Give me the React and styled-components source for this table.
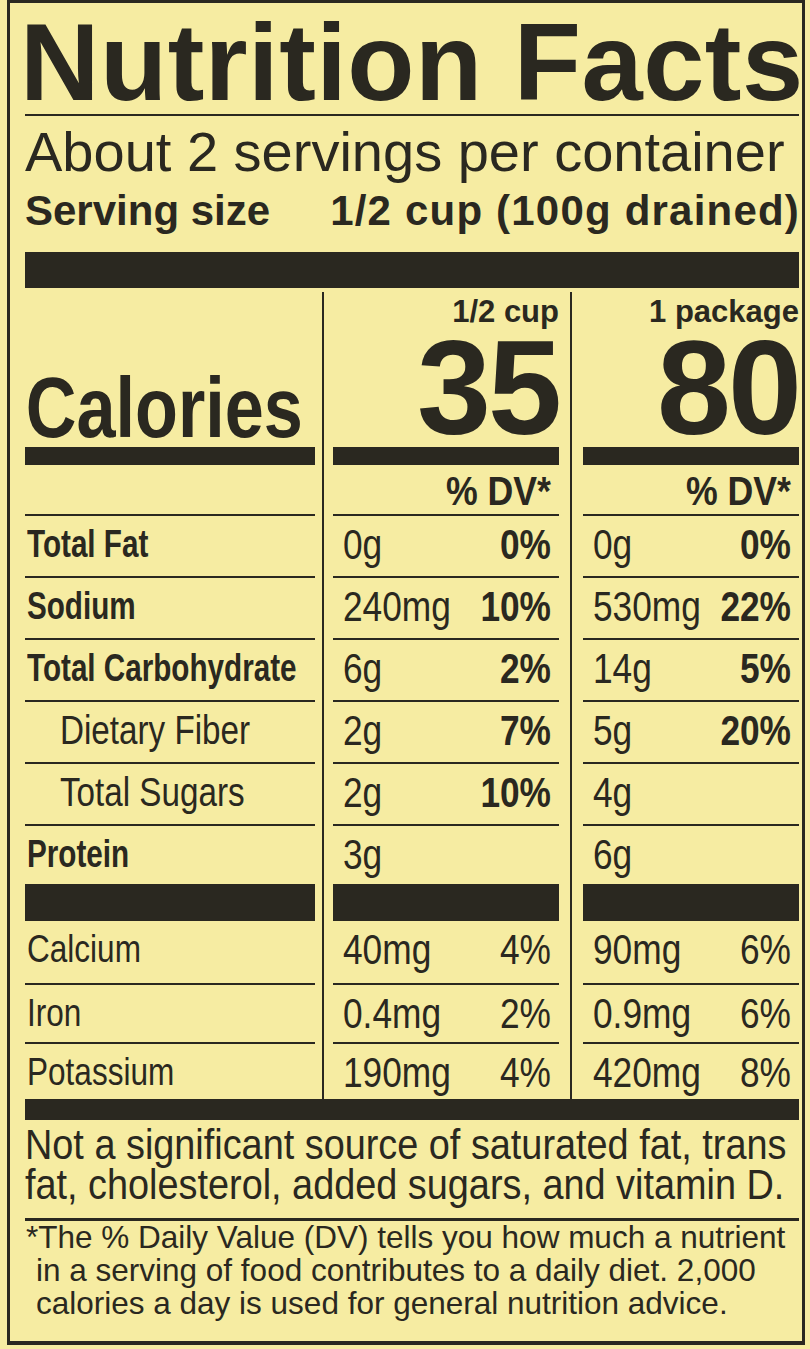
import React from "react";
import styled, { createGlobalStyle } from "styled-components";

const INK = "#2a2820";
const PAPER = "#f6eca2";
const SANS = "'Liberation Sans', Arial, Helvetica, sans-serif";

const NUTRIENTS = [
  { name: "Total Fat", bold: true, half: ["0g", "0%"], pack: ["0g", "0%"] },
  { name: "Sodium", bold: true, half: ["240mg", "10%"], pack: ["530mg", "22%"] },
  { name: "Total Carbohydrate", bold: true, half: ["6g", "2%"], pack: ["14g", "5%"] },
  { name: "Dietary Fiber", indent: true, half: ["2g", "7%"], pack: ["5g", "20%"] },
  { name: "Total Sugars", indent: true, half: ["2g", "10%"], pack: ["4g", ""] },
  { name: "Protein", bold: true, half: ["3g", ""], pack: ["6g", ""] },
];

const VITAMINS = [
  { name: "Calcium", h: 62, half: ["40mg", "4%"], pack: ["90mg", "6%"] },
  { name: "Iron", h: 57, half: ["0.4mg", "2%"], pack: ["0.9mg", "6%"] },
  { name: "Potassium", h: 55, half: ["190mg", "4%"], pack: ["420mg", "8%"] },
];

const GlobalStyle = createGlobalStyle`
  html, body {
    margin: 0;
    padding: 0;
    background: ${PAPER};
  }
  body {
    font-family: ${SANS};
    color: ${INK};
  }
`;

const Label = styled.div`
  box-sizing: border-box;
  width: 798px;
  height: 1345px;
  margin-left: 7px;
  border: 3px solid ${INK};
  border-bottom-width: 4px;
  padding: 7px 3px 0 15px;
  display: flex;
  flex-direction: column;
`;

// the printed label uses a condensed face; squeeze regular sans to match
const Squeeze = styled.div`
  display: flex;
  align-items: baseline;
  justify-content: ${(p) => p.$justify || "space-between"};
  width: ${(p) => 100 / p.$k}%;
  transform: scaleX(${(p) => p.$k});
  transform-origin: left top;
  white-space: nowrap;
`;

const Title = styled.h1`
  margin: 0;
  font: 700 110px/104px ${SANS};
  letter-spacing: 0.5px;
  text-indent: -5px;
  white-space: nowrap;
  border-bottom: 2px solid ${INK};
`;

const Servings = styled.div`
  font: 400 56px/71px ${SANS};
  white-space: nowrap;
`;

const ServingSize = styled.div`
  display: flex;
  justify-content: space-between;
  font: 700 42px/47px ${SANS};
  white-space: nowrap;
`;

const ServingAmount = styled.span`
  letter-spacing: 1.2px;
  margin-right: -1px;
`;

const Bar = styled.div`
  height: ${(p) => p.$h}px;
  margin-top: ${(p) => p.$top || 0}px;
  background: ${INK};
`;

const Columns = styled.div`
  display: flex;
`;

const Column = styled.div`
  display: flex;
  flex-direction: column;
  min-width: 0;
  width: ${(p) => (p.$w ? `${p.$w}px` : "auto")};
  flex: ${(p) => (p.$w ? "none" : "1")};
`;

const Divider = styled.div`
  width: 2px;
  margin: 4px ${(p) => p.$right}px 0 ${(p) => p.$left}px;
  background: ${INK};
`;

const HeaderCell = styled.div`
  height: 159px;
  display: flex;
  flex-direction: column;
  justify-content: ${(p) => (p.$left ? "flex-end" : "flex-start")};
  align-items: ${(p) => (p.$left ? "stretch" : "flex-end")};
`;

const CaloriesWord = styled.div`
  font: 700 86px/80px ${SANS};
  padding-left: 1px;
`;

const PortionLabel = styled.div`
  font: 700 31px/48px ${SANS};
  white-space: nowrap;
`;

const BigNumber = styled.div`
  font: 700 133px/105px ${SANS};
  letter-spacing: -3px;
`;

const DvCell = styled.div`
  height: 49px;
  border-bottom: 2px solid ${INK};
  font: 700 41px/52px ${SANS};
  padding-right: 8px;
`;

const Cell = styled.div`
  height: ${(p) => p.$h}px;
  border-bottom: ${(p) => (p.$last ? "none" : `2px solid ${INK}`)};
  font: 400 42px/57px ${SANS};
  padding: ${(p) => (p.$values ? "0 8px 0 10px" : `0 0 0 ${p.$indent ? 35 : 2}px`)};
`;

const Name = styled.span`
  font-weight: ${(p) => (p.$bold ? 700 : 400)};
  font-size: ${(p) => (p.$indent ? 40 : 38)}px;
`;

const Percent = styled.span`
  font-weight: ${(p) => (p.$bold ? 700 : 400)};
`;

const Statement = styled.div`
  margin-top: 4px;
  padding-bottom: 14px;
  border-bottom: 3px solid ${INK};
  font: 400 43px/40px ${SANS};
`;

const Footnote = styled.p`
  margin: 0;
  padding-left: 11px;
  text-indent: -10px;
  font: 400 31.5px/33px ${SANS};
  white-space: nowrap;
`;

function nameSqueeze(n) {
  if (n.bold) return 0.78;
  return 0.83;
}

function NameColumn() {
  const lastN = NUTRIENTS.length - 1;
  const lastV = VITAMINS.length - 1;
  return (
    <Column $w={290}>
      <HeaderCell $left>
        <Squeeze $k={0.816} $justify="flex-start">
          <CaloriesWord>Calories</CaloriesWord>
        </Squeeze>
      </HeaderCell>
      <Bar $h={18} />
      <DvCell />
      {NUTRIENTS.map((n, i) => (
        <Cell key={n.name} $h={i === lastN ? 58 : 60} $last={i === lastN} $indent={n.indent}>
          <Squeeze $k={nameSqueeze(n)} $justify="flex-start">
            <Name $bold={n.bold} $indent={n.indent}>
              {n.name}
            </Name>
          </Squeeze>
        </Cell>
      ))}
      <Bar $h={37} />
      {VITAMINS.map((v, i) => (
        <Cell key={v.name} $h={v.h} $last={i === lastV}>
          <Squeeze $k={0.83} $justify="flex-start">
            <Name>{v.name}</Name>
          </Squeeze>
        </Cell>
      ))}
    </Column>
  );
}

function PortionColumn({ portion, calories, field, width }) {
  const lastN = NUTRIENTS.length - 1;
  const lastV = VITAMINS.length - 1;
  return (
    <Column $w={width}>
      <HeaderCell>
        <PortionLabel>{portion}</PortionLabel>
        <BigNumber>{calories}</BigNumber>
      </HeaderCell>
      <Bar $h={18} />
      <DvCell>
        <Squeeze $k={0.87} $justify="flex-end">
          % DV*
        </Squeeze>
      </DvCell>
      {NUTRIENTS.map((n, i) => (
        <Cell key={n.name} $values $h={i === lastN ? 58 : 60} $last={i === lastN}>
          <Squeeze $k={0.84}>
            <span>{n[field][0]}</span>
            <Percent $bold>{n[field][1]}</Percent>
          </Squeeze>
        </Cell>
      ))}
      <Bar $h={37} />
      {VITAMINS.map((v, i) => (
        <Cell key={v.name} $values $h={v.h} $last={i === lastV}>
          <Squeeze $k={0.84}>
            <span>{v[field][0]}</span>
            <Percent>{v[field][1]}</Percent>
          </Squeeze>
        </Cell>
      ))}
    </Column>
  );
}

export default function App() {
  return (
    <>
      <GlobalStyle />
      <Label>
        <Title>Nutrition Facts</Title>
        <Servings>About 2 servings per container</Servings>
        <ServingSize>
          <span>Serving size</span>
          <ServingAmount>1/2 cup (100g drained)</ServingAmount>
        </ServingSize>
        <Bar $h={36} $top={18} />
        <Columns>
          <NameColumn />
          <Divider $left={7} $right={9} />
          <PortionColumn portion="1/2 cup" calories="35" field="half" width={226} />
          <Divider $left={11} $right={11} />
          <PortionColumn portion="1 package" calories="80" field="pack" />
        </Columns>
        <Bar $h={21} />
        <Statement>
          <Squeeze $k={0.88} $justify="flex-start">
            Not a significant source of saturated fat, trans
          </Squeeze>
          <Squeeze $k={0.88} $justify="flex-start">
            fat, cholesterol, added sugars, and vitamin D.
          </Squeeze>
        </Statement>
        <Footnote>
          *The % Daily Value (DV) tells you how much a nutrient
          <br />
          in a serving of food contributes to a daily diet. 2,000
          <br />
          calories a day is used for general nutrition advice.
        </Footnote>
      </Label>
    </>
  );
}
